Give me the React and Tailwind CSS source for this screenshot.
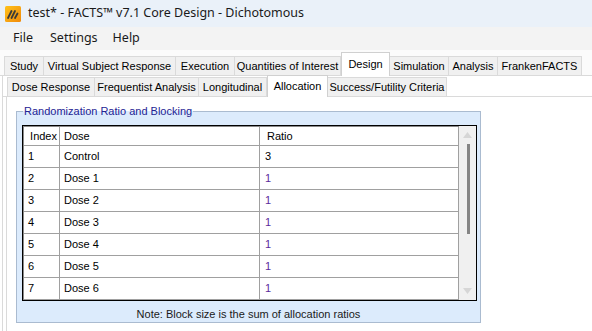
import React from "react";

const topTabs = [
  { label: "Study", w: 40 },
  { label: "Virtual Subject Response", w: 132 },
  { label: "Execution", w: 59 },
  { label: "Quantities of Interest", w: 106 },
  { label: "Design", w: 49, sel: true },
  { label: "Simulation", w: 59 },
  { label: "Analysis", w: 49 },
  { label: "FrankenFACTS", w: 84 },
];

const subTabs = [
  { label: "Dose Response", w: 88 },
  { label: "Frequentist Analysis", w: 104 },
  { label: "Longitudinal", w: 68 },
  { label: "Allocation", w: 61, sel: true },
  { label: "Success/Futility Criteria", w: 119 },
];

const rows = [
  ["1", "Control", "3"],
  ["2", "Dose 1", "1"],
  ["3", "Dose 2", "1"],
  ["4", "Dose 3", "1"],
  ["5", "Dose 4", "1"],
  ["6", "Dose 5", "1"],
  ["7", "Dose 6", "1"],
];

function AppIcon() {
  return (
    <svg width="16" height="16" viewBox="0 0 16 16">
      <defs>
        <linearGradient id="g" x1="0" y1="0" x2="1" y2="1">
          <stop offset="0" stopColor="#ffc21a" />
          <stop offset="1" stopColor="#f08a0c" />
        </linearGradient>
      </defs>
      <rect x="0" y="0" width="16" height="16" rx="1.5" fill="url(#g)" />
      <g stroke="#3a3a3a" strokeWidth="1.8" strokeLinecap="round">
        <line x1="3" y1="12" x2="6.5" y2="5" />
        <line x1="6.5" y1="12" x2="10" y2="5" />
        <line x1="10" y1="12" x2="12.5" y2="7.5" />
      </g>
    </svg>
  );
}

export default function App() {
  return (
    <div
      className="w-[592px] h-[331px] bg-white overflow-hidden relative text-black"
      style={{ fontFamily: '"Liberation Sans", Arial, sans-serif' }}
    >
      {/* Title bar */}
      <div
        className="h-[27px] bg-[#eaf1f9] flex items-center pl-[5px] gap-[7px] text-[12.5px] text-[#1a1a1a]"
        style={{ fontFamily: '"Noto Sans", "Open Sans", sans-serif' }}
      >
        <AppIcon />
        <span className="leading-none whitespace-nowrap">test* - FACTS™ v7.1 Core Design - Dichotomous</span>
      </div>
      {/* Menu bar */}
      <div
        className="h-[23px] bg-[#f3f3f3] flex items-center text-[12.5px] text-[#1a1a1a] whitespace-nowrap"
        style={{ fontFamily: '"Noto Sans", "Open Sans", sans-serif' }}
      >
        <span className="ml-[13px]">File</span>
        <span className="ml-[17px]">Settings</span>
        <span className="ml-[15px]">Help</span>
      </div>
      {/* Top tabs */}
      <div className="h-[26px] bg-[#fbfbfb] flex items-end pl-[4px] border-b border-[#dadada] relative">
        {topTabs.map((t) =>
          t.sel ? (
            <div
              key={t.label}
              className="h-[24px] -mb-[1px] bg-white border border-b-0 border-[#d0d0d0] flex items-start justify-center pt-[3px] text-[11px] whitespace-nowrap relative z-10"
              style={{ width: t.w }}
            >
              {t.label}
            </div>
          ) : (
            <div
              key={t.label}
              className="h-[19px] bg-[#f0f0f0] border border-b-0 border-l-0 first:border-l border-[#dadada] flex items-center justify-center text-[11px] whitespace-nowrap"
              style={{ width: t.w }}
            >
              {t.label}
            </div>
          )
        )}
      </div>
      {/* Tab page */}
      <div className="ml-[2px] border-l border-[#dadada] h-[255px] bg-white">
        <div className="h-[21px] flex items-end pl-[4px] border-b border-[#dadada]">
          {subTabs.map((t) =>
            t.sel ? (
              <div
                key={t.label}
                className="h-[22px] -mb-[1px] bg-white border border-b-0 border-[#d0d0d0] flex items-start justify-center pt-[2px] text-[11px] whitespace-nowrap relative z-10"
                style={{ width: t.w }}
              >
                {t.label}
              </div>
            ) : (
              <div
                key={t.label}
                className="h-[19px] bg-[#f0f0f0] border border-b-0 border-l-0 first:border-l border-[#dadada] flex items-center justify-center text-[11px] whitespace-nowrap"
                style={{ width: t.w }}
              >
                {t.label}
              </div>
            )
          )}
        </div>
        <div className="ml-[3px] border-l border-[#dadada] h-[234px] pt-[14px] pl-[9px]">
          {/* Group box */}
          <div className="relative w-[465px] h-[212px] bg-[#dcebfc] border-l border-r border-b border-[#aabbd0] pt-[14px] pl-[5px]">
            <div className="absolute -top-[0px] -left-[1px] -right-[1px] flex items-center h-[1px]">
              <div className="w-[7px] h-[1px] bg-[#aabbd0]" />
              <span className="px-[1px] text-[11px] leading-[13px] whitespace-nowrap text-[#232394]">
                Randomization Ratio and Blocking
              </span>
              <div className="flex-1 h-[1px] bg-[#aabbd0]" />
            </div>
            {/* Grid */}
            <div className="w-[455px] h-[176px] bg-white border border-black flex overflow-hidden">
              <div className="w-[436px] flex flex-col border-l border-t border-[#8a8a8a] text-[11px]">
                <div className="h-[19px] flex border-b border-[#a0a0a0] shrink-0">
                  <div className="w-[36px] border-r border-[#a0a0a0] flex items-center justify-end pr-[2px]">Index</div>
                  <div className="w-[200px] border-r border-[#a0a0a0] flex items-center pl-[4px]">Dose</div>
                  <div className="w-[199px] border-r border-[#a0a0a0] flex items-center pl-[7px]">Ratio</div>
                </div>
                {rows.map((r, i) => (
                  <div key={i} className="h-[22px] flex border-b border-[#a0a0a0] shrink-0">
                    <div className="w-[36px] border-r border-[#a0a0a0] flex items-center pl-[4px]">{r[0]}</div>
                    <div className="w-[200px] border-r border-[#a0a0a0] flex items-center pl-[4px]">{r[1]}</div>
                    <div
                      className={
                        "w-[199px] border-r border-[#a0a0a0] flex items-center pl-[5px] " +
                        (i === 0 ? "text-black" : "text-[#5c2a9c]")
                      }
                    >
                      {r[2]}
                    </div>
                  </div>
                ))}
              </div>
              {/* Scrollbar */}
              <div className="w-[17px] bg-[#f0f0f0] flex flex-col items-center relative">
                <svg width="9" height="6" className="mt-[6px]" viewBox="0 0 9 6">
                  <polygon points="4.5,0 9,6 0,6" fill="#d6d6d6" />
                </svg>
                <div className="w-[3px] h-[90px] bg-[#858585] mt-[6px] ml-[1px]" />
                <div className="flex-1" />
                <svg width="9" height="6" className="mb-[6px]" viewBox="0 0 9 6">
                  <polygon points="0,0 9,0 4.5,6" fill="#d6d6d6" />
                </svg>
              </div>
            </div>
            <div className="text-[11px] text-center mt-[5px] pr-[5px] text-[#1a1a1a] whitespace-nowrap">
              Note: Block size is the sum of allocation ratios
            </div>
          </div>
        </div>
      </div>
    </div>
  );
}
